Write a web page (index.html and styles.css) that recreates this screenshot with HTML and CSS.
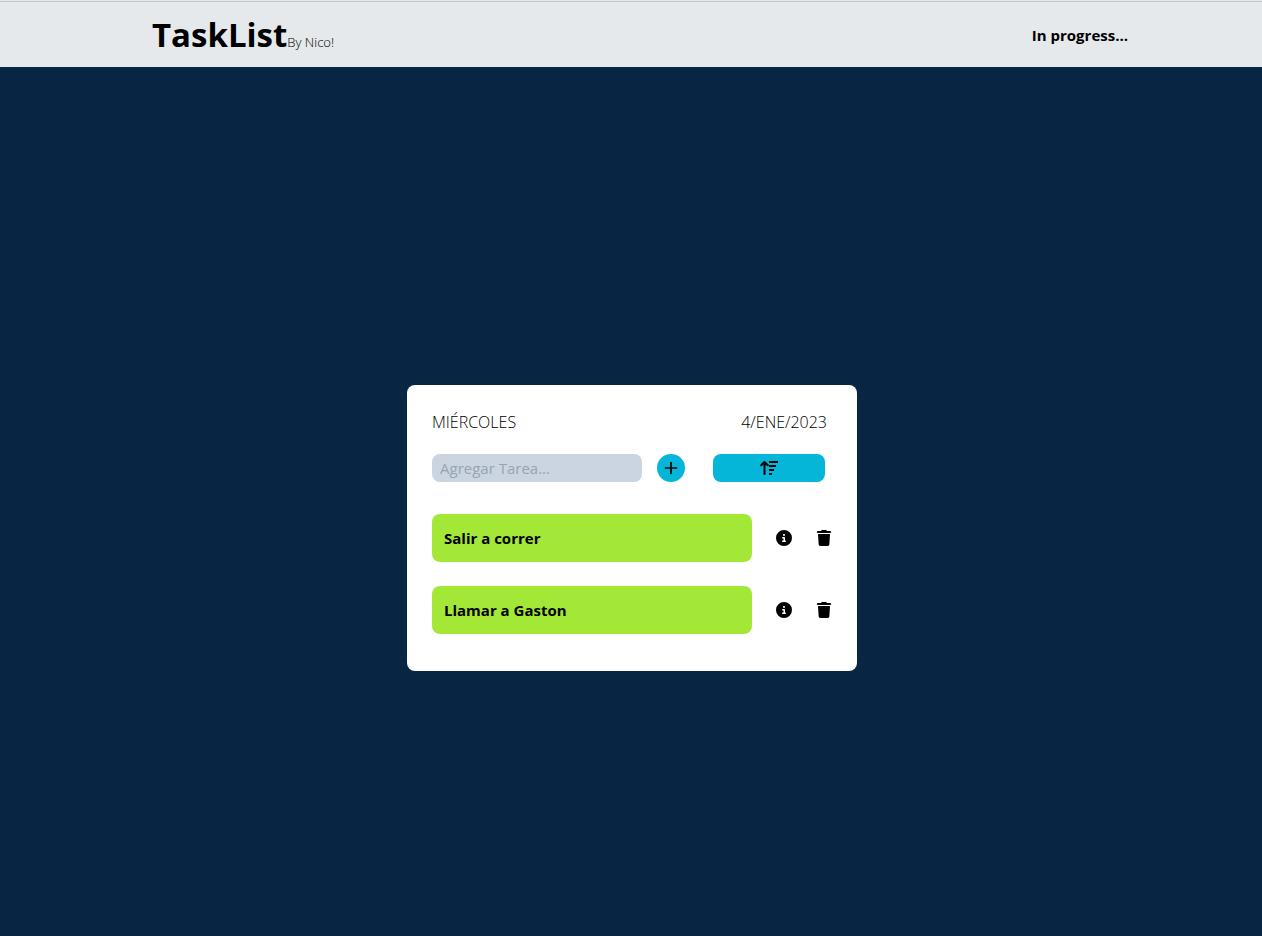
FILE: index.html
```html
<!DOCTYPE html>
<html lang="es">
<head>
<meta charset="utf-8">
<meta name="viewport" content="width=device-width, initial-scale=1">
<title>TaskList</title>
<link rel="stylesheet" href="styles.css">
</head>
<body>
<svg class="sprite" aria-hidden="true">
  <symbol id="info" viewBox="0 0 512 512"><path d="M256 512A256 256 0 1 0 256 0a256 256 0 1 0 0 512zM216 336h24V272H216c-13 0-24-11-24-24s11-24 24-24h48c13 0 24 11 24 24v88h8c13 0 24 11 24 24s-11 24-24 24H216c-13 0-24-11-24-24s11-24 24-24zm40-208a32 32 0 1 1 0 64 32 32 0 1 1 0-64z"/></symbol>
  <symbol id="trash" viewBox="0 0 448 512"><path d="M135 18C141 7 152 0 164 0h120c12 0 23 7 29 18l7 14h96c18 0 32 14 32 32s-14 32-32 32H32C14 96 0 82 0 64s14-32 32-32h96zM32 128h384l-21 339c-2 25-23 45-48 45H101c-25 0-46-20-48-45z"/></symbol>
</svg>
<header class="header">
  <div class="brand">
    <h1 class="brand-name">TaskList</h1>
    <span class="brand-author">By Nico!</span>
  </div>
  <p class="status">In progress...</p>
</header>
<main class="main">
  <section class="card">
    <div class="date-row">
      <span>MIÉRCOLES</span>
      <time datetime="2023-01-04">4/ENE/2023</time>
    </div>
    <form class="form">
      <input class="task-input" type="text" placeholder="Agregar Tarea..." aria-label="Agregar Tarea">
      <button class="add" type="button" aria-label="Agregar">
        <svg width="14" height="16" viewBox="0 0 14 16" fill="none" stroke="currentColor" stroke-width="1.7" stroke-linecap="round"><path d="M7 2.5v11M1.5 8h11"/></svg>
      </button>
      <button class="sort" type="button" aria-label="Ordenar">
        <svg width="18" height="16" viewBox="0 0 18 16" fill="none" stroke="currentColor" stroke-width="2" stroke-linejoin="round"><path stroke-linecap="round" d="M4.5 14V2M1.2 5.2L4.5 2 7.8 5.2"/><path d="M9 2h9M9 6h7M9 10h5M9 14h3"/></svg>
      </button>
    </form>
    <ul class="tasks">
      <li class="task">
        <span class="task-name">Salir a correr</span>
        <button class="icon-button" type="button" aria-label="Información"><svg width="16" height="16"><use href="#info"/></svg></button>
        <button class="icon-button" type="button" aria-label="Eliminar"><svg width="16" height="16"><use href="#trash"/></svg></button>
      </li>
      <li class="task">
        <span class="task-name">Llamar a Gaston</span>
        <button class="icon-button" type="button" aria-label="Información"><svg width="16" height="16"><use href="#info"/></svg></button>
        <button class="icon-button" type="button" aria-label="Eliminar"><svg width="16" height="16"><use href="#trash"/></svg></button>
      </li>
    </ul>
  </section>
</main>
</body>
</html>
```
FILE: styles.css
```css
* { box-sizing: border-box; }

body {
  margin: 0;
  min-height: 100vh;
  display: flex;
  flex-direction: column;
  background: #082644;
  color: #000;
  font: 16px/24px "Segoe UI", "Open Sans", "Noto Sans", sans-serif;
}

h1, p, ul { margin: 0; padding: 0; }

button {
  border: 0;
  padding: 0;
  color: inherit;
  font: inherit;
  cursor: pointer;
}

svg { display: block; fill: currentColor; }

svg[fill="none"] { fill: none; }

.sprite { position: absolute; width: 0; height: 0; }

.header {
  display: flex;
  justify-content: space-between;
  align-items: center;
  height: 67px;
  padding: 3px 134px 0 152px;
  background: linear-gradient(#e5e9eb 1px, #c2c4c6 1px 2px, #e5e9eb 2px);
}

.brand { display: flex; align-items: baseline; }

.brand-name { font-size: 33px; line-height: 40px; font-weight: 700; }

.brand-author { font-size: 13px; line-height: 16px; font-weight: 300; }

.status { font-size: 15px; font-weight: 700; }

.main {
  flex: 1;
  display: flex;
  justify-content: center;
  align-items: center;
  padding: 53px 0 0 2px;
}

.card {
  width: 450px;
  max-width: 100%;
  padding: 25px 25px 37px;
  border-radius: 8px;
  background: #fff;
}

.date-row {
  display: flex;
  justify-content: space-between;
  padding-right: 5px;
  font-weight: 300;
}

.form {
  display: flex;
  align-items: center;
  margin-top: 20px;
  padding-right: 7px;
}

.task-input {
  flex: 1;
  min-width: 0;
  height: 28px;
  padding: 0 8px;
  border: 0;
  border-radius: 8px;
  background: #cbd5e1;
  color: inherit;
  font: inherit;
  font-size: 15px;
}

.task-input::placeholder { color: #98a3b2; opacity: 1; }

.add, .sort {
  display: flex;
  align-items: center;
  justify-content: center;
  height: 28px;
  background: #06b6d8;
}

.add { width: 28px; margin: 0 28px 0 15px; border-radius: 50%; }

.sort { width: 112px; border-radius: 8px; }

.tasks {
  display: grid;
  gap: 24px;
  margin-top: 32px;
  list-style: none;
}

.task { display: flex; align-items: center; gap: 24px; }

.task-name {
  flex: 1;
  padding: 12px;
  border-radius: 8px;
  background: #a3e836;
  font-size: 15px;
  font-weight: 700;
}

.icon-button { flex: none; background: none; }
```
